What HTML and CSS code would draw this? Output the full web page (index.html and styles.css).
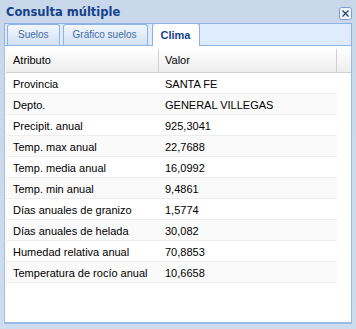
FILE: index.html
```html
<!DOCTYPE html>
<html lang="es">
<head>
	<meta charset="UTF-8">
	<title>Consulta múltiple</title>
	<link rel="stylesheet" href="styles.css">
</head>
<body>
	<div class="window">
		<div class="win-title">
			<span class="win-text">Consulta múltiple</span>
			<a href="#" class="btn-close">
				<svg width="13" height="13" viewBox="0 0 13 13">
					<rect x="0.5" y="0.5" width="12" height="12" rx="2" fill="#eef3fa" stroke="#7f9dc9"/>
					<path d="M3.5 3.5 L9.5 9.5 M9.5 3.5 L3.5 9.5" stroke="#2d4a78" stroke-width="1.4"/>
				</svg>
			</a>
		</div>
		<div class="tab-panel">
			<ul class="tab-strip">
				<li class="tab">Suelos</li>
				<li class="tab">Gráfico suelos</li>
				<li class="tab selected">Clima</li>
			</ul>
			<div class="tab-body">
				<div class="grid-head">
					<div class="col-attr">Atributo</div>
					<div class="col-val">Valor</div>
					<div class="col-fill"></div>
				</div>
				<ul class="grid-rows">
					<li class="row"><span class="col-attr">Provincia</span><span class="col-val">SANTA FE</span></li>
					<li class="row alt"><span class="col-attr">Depto.</span><span class="col-val">GENERAL VILLEGAS</span></li>
					<li class="row"><span class="col-attr">Precipit. anual</span><span class="col-val">925,3041</span></li>
					<li class="row alt"><span class="col-attr">Temp. max anual</span><span class="col-val">22,7688</span></li>
					<li class="row"><span class="col-attr">Temp. media anual</span><span class="col-val">16,0992</span></li>
					<li class="row alt"><span class="col-attr">Temp. min anual</span><span class="col-val">9,4861</span></li>
					<li class="row"><span class="col-attr">Días anuales de granizo</span><span class="col-val">1,5774</span></li>
					<li class="row alt"><span class="col-attr">Días anuales de helada</span><span class="col-val">30,082</span></li>
					<li class="row"><span class="col-attr">Humedad relativa anual</span><span class="col-val">70,8853</span></li>
					<li class="row alt"><span class="col-attr">Temperatura de rocío anual</span><span class="col-val">10,6658</span></li>
				</ul>
			</div>
		</div>
	</div>
</body>
</html>
```
FILE: styles.css
```css
body{margin: 0; font-family: "Liberation Sans", Arial, sans-serif; font-size: 11px;}
.window{
	width: 356px; height: 329px; box-sizing: border-box; background: linear-gradient(#c8d7ea, #cddcef);
	padding: 0 4px 5px 4px; display: flex; flex-direction: column;
}
.win-title{
	height: 23px; display: flex; align-items: center; justify-content: space-between;
	padding: 0 0 0 2px; flex: none;
}
.win-text{font-family: "DejaVu Sans", sans-serif; font-weight: bold; font-size: 11.5px; color: #15428b; margin-top: 1px;}
.btn-close{display: block; width: 13px; height: 13px; margin-top: 3px;}
.btn-close svg{display: block;}
.tab-panel{
	flex: 1; display: flex; flex-direction: column;
}
.tab-strip{
	list-style: none; padding: 0 0 0 2px; height: 23px; box-sizing: border-box;
	background: #deecfd; border: 1px solid #8db2e3;
	margin: 0; display: flex; align-items: flex-end; gap: 3px; flex: none;
}
.tab{
	height: 21px; line-height: 20px; padding: 0 10px; box-sizing: border-box;
	border: 1px solid #8db2e3; border-bottom: none; border-radius: 3px 3px 0 0;
	background: linear-gradient(#f2f7fd, #d3e1f3); color: #416aa3; font-size: 10px;
}
.tab + .tab{padding: 0 10px 0 9px;}
.tab.selected{
	height: 23px; line-height: 22px; background: #fff; color: #15428b; font-weight: bold;
	padding: 0 9px 0 8px; margin-bottom: -1px; font-size: 11px; margin-left: 1px;
}
.tab-body{
	flex: 1; background: #fff; border-left: 1px solid #a6c0e3; border-right: 1px solid #99bbe8;
	border-bottom: 2px solid #99bbe8; padding: 3px 0 0 1px;
}
.grid-head{
	display: flex; height: 24px; background: linear-gradient(#fff, #ededed);
	border-bottom: 1px solid #d0d0d0; color: #000; box-sizing: border-box;
}
.grid-head div{line-height: 23px;}
.col-attr{width: 153px; padding-left: 7px; box-sizing: border-box; flex: none;}
.col-val{width: 178px; padding-left: 6px; box-sizing: border-box; flex: none;}
.grid-head .col-attr, .grid-head .col-val{border-right: 1px solid #d0d0d0;}
.col-fill{flex: 1;}
.grid-rows{list-style: none; margin: 0; padding: 0; width: 331px;}
.row{display: flex; height: 21px; line-height: 22px; border-bottom: 1px solid #ededed; box-sizing: border-box;}
.row.alt{background: #fafafa;}
```
